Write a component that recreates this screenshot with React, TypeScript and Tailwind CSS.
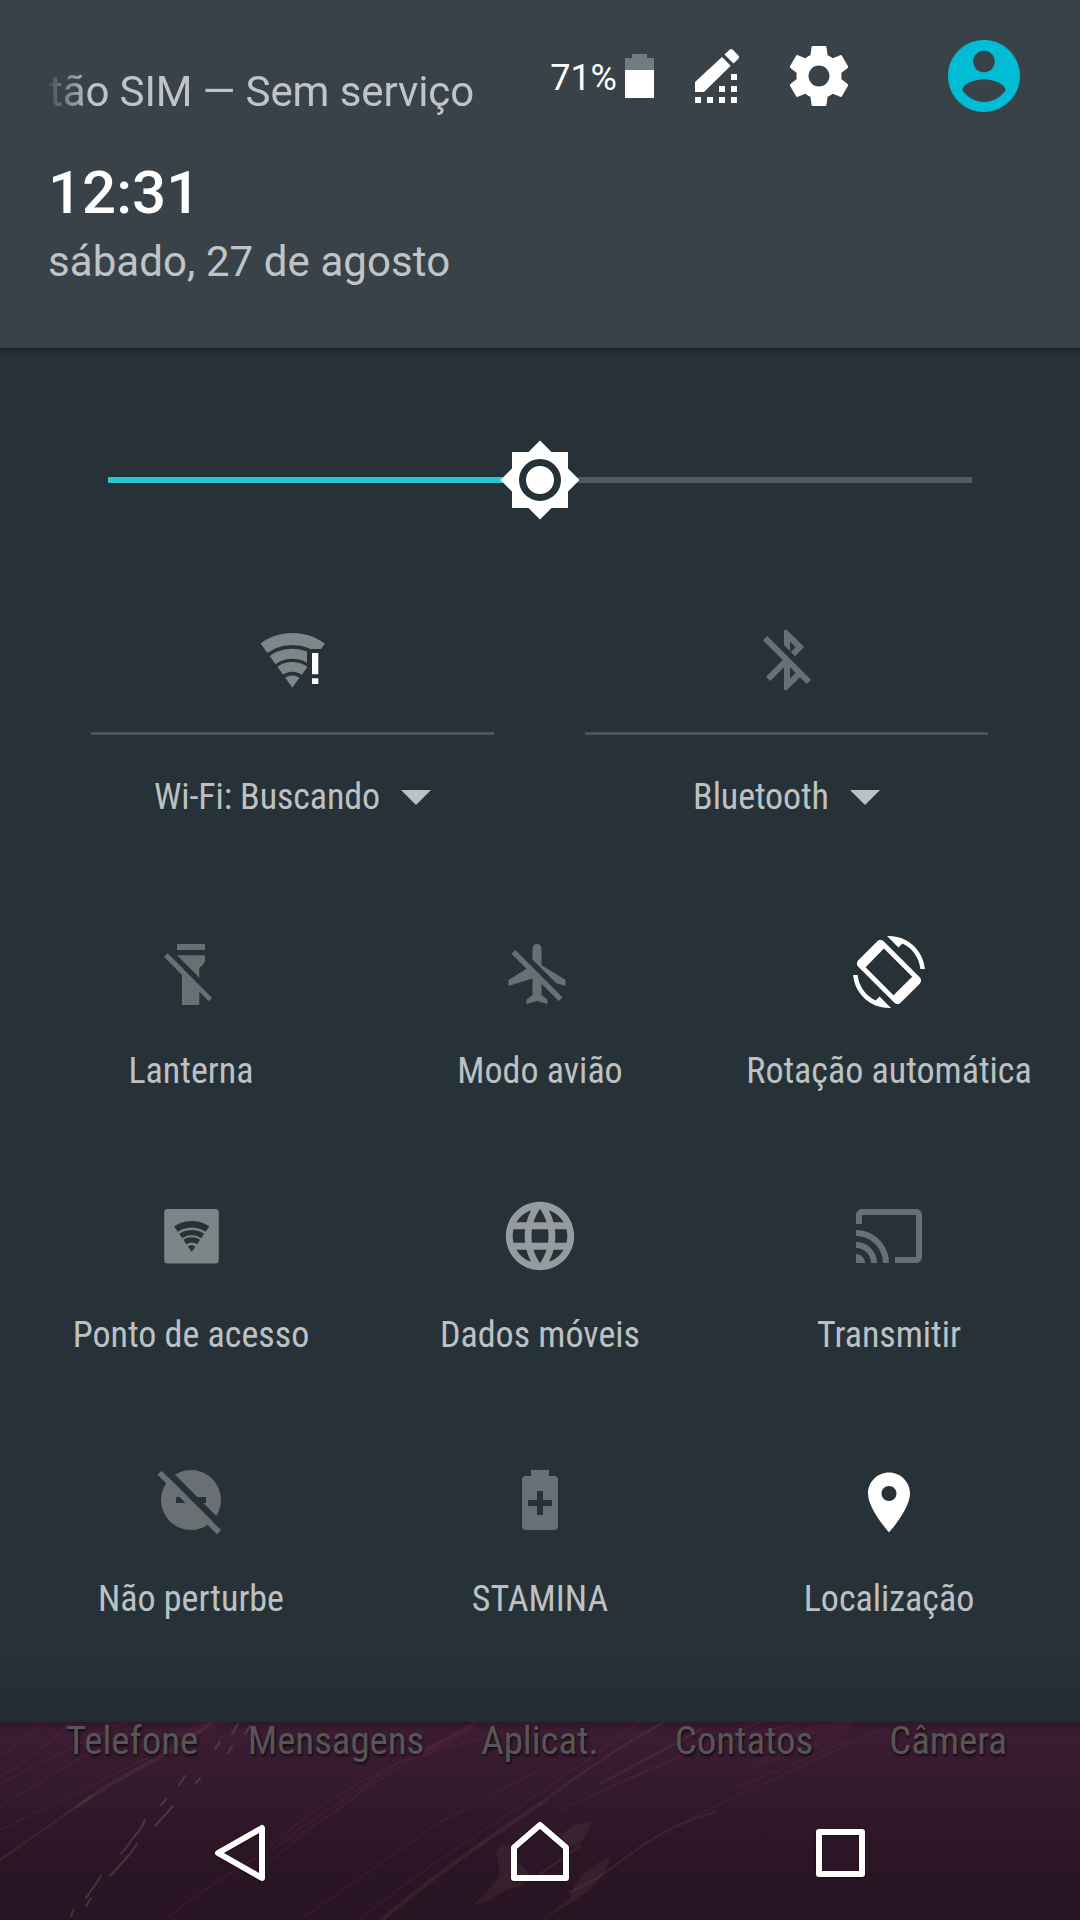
import type { ReactNode } from 'react'
import { MdCast, MdLanguage } from 'react-icons/md'

const CONDENSED = "font-['Roboto_Condensed','Roboto',sans-serif] [font-stretch:75%]"

function WifiIcon() {
  return (
    <svg viewBox="0 0 72 72" className="size-[72px]">
      <defs>
        <clipPath id="wifi-wedge">
          <path d="M35.3 63.5L-8 3.5V-10H80V3.5z" />
        </clipPath>
        <mask id="wifi-alert">
          <rect width="72" height="72" fill="#fff" />
          <path d="M50 25H72V72H50z" fill="#000" />
        </mask>
      </defs>
      <g clipPath="url(#wifi-wedge)" mask="url(#wifi-alert)" fill="none" stroke="#7f8689">
        <circle cx="35.3" cy="63.5" r="48.5" strokeWidth="12" />
        <circle cx="35.3" cy="63.5" r="33.7" strokeWidth="10" />
        <circle cx="35.3" cy="63.5" r="20.6" strokeWidth="9.6" />
        <circle cx="35.3" cy="63.5" r="6" strokeWidth="12" />
      </g>
      <path d="M55 29h6.3v21.3H55zM55 54.3h6.3v5.8H55z" fill="#fff" />
    </svg>
  )
}

function BluetoothOffIcon() {
  return (
    <svg viewBox="0 0 24 24" className="size-[72px]" fill="#677076">
      <path d="M13 5.83l1.88 1.88-1.6 1.6 1.41 1.41 3.02-3.02L12 2h-1v5.03l2 2v-3.2zM5.41 4L4 5.41 10.59 12 5 17.59 6.41 19 11 14.41V22h1l4.29-4.29 2.3 2.29L20 18.59 5.41 4zM13 18.17v-3.76l1.88 1.88L13 18.17z" />
    </svg>
  )
}

function FlashlightOffIcon() {
  return (
    <svg viewBox="0 0 72 72" className="size-[72px]" fill="#696f72">
      <path d="M22 8h28v6H22zM22 19.3h28v4.2c0 3.4-2.6 6.6-5.7 8.2v10zM12.8 17.3L9 20.7 27 39v30h17.3V55.7l9.5 9.6L57 62z" />
    </svg>
  )
}

function AirplaneOffIcon() {
  return (
    <svg viewBox="0.5 -0.67 24 24" className="size-[72px]" fill="#696f72">
      <path d="M13 9V3.5c0-.83-.67-1.5-1.5-1.5S10 2.67 10 3.5v3.68l7.83 7.83L21 16v-2l-8-5zM3 5.27l4.99 4.99L2 14v2l8-2.5V19l-2 1.5V22l3.5-1 3.5 1v-1.5L13 19v-3.73L18.73 21 20 19.73 4.27 4 3 5.27z" />
    </svg>
  )
}

function RotationIcon() {
  return (
    <svg viewBox="0 0 24 24" className="size-[72px]" fill="#fff" fillRule="evenodd">
      <path d="M16.48 2.52c3.27 1.55 5.61 4.72 5.97 8.48h1.5C23.44 4.84 18.29 0 12 0l-.66.03 3.81 3.81 1.33-1.32zM10.23 1.75c-.59-.59-1.54-.59-2.12 0L1.75 8.11c-.59.59-.59 1.54 0 2.12l12.02 12.02c.59.59 1.54.59 2.12 0l6.36-6.36c.59-.59.59-1.54 0-2.12L10.23 1.75zM10.3 4.2L4.2 10.4l9.3 9.35 6.25-6.2zM7.52 21.48C4.25 19.94 1.91 16.76 1.55 13H.05C.56 19.16 5.71 24 12 24l.66-.03-3.81-3.81-1.33 1.32z" />
    </svg>
  )
}

function HotspotIcon() {
  return (
    <svg viewBox="0 0 72 72" className="size-[72px]">
      <defs>
        <clipPath id="hotspot-wedge">
          <path d="M36.7 52L12.7 17V0h48v17z" />
        </clipPath>
      </defs>
      <rect x="9.2" y="9" width="54.6" height="54.6" rx="3.5" fill="#7e8588" />
      <g clipPath="url(#hotspot-wedge)" fill="none" stroke="#263238">
        <circle cx="36.7" cy="52" r="27.7" strokeWidth="6.6" />
        <circle cx="36.7" cy="52" r="19.4" strokeWidth="5.4" />
        <circle cx="36.7" cy="52" r="12.2" strokeWidth="5.2" />
        <circle cx="36.7" cy="52" r="3.4" strokeWidth="6.8" />
      </g>
    </svg>
  )
}

function DndOffIcon() {
  return (
    <svg viewBox="0 0 72 72" className="size-[72px]" fill="#696f72">
      <mask id="dnd-cut">
        <rect width="72" height="72" fill="#fff" />
        <path d="M21 33h30v6H21z" fill="#000" />
        <path d="M0 8.2V0L72 72v8.2z" fill="#fff" />
        <path d="M0 0L72 72V62.7L9.3 0z" fill="#000" />
      </mask>
      <circle cx="36" cy="36" r="30" mask="url(#dnd-cut)" />
      <path d="M6.6 6.8L2.5 10.8 62 70.3l4.1-4z" />
    </svg>
  )
}

function StaminaIcon() {
  return (
    <svg viewBox="0 0 72 72" className="size-[72px]" fill="#677076" fillRule="evenodd">
      <path d="M27 6h18v6h5.5c2 0 3.5 1.5 3.5 3.5v47c0 2-1.5 3.5-3.5 3.5h-29c-2 0-3.5-1.5-3.5-3.5v-47c0-2 1.5-3.5 3.5-3.5H27zM33 27v9h-9v6h9v9h6v-9h9v-6h-9v-9z" />
    </svg>
  )
}

function LocationIcon() {
  return (
    <svg viewBox="0 -0.8 24 24" className="size-[72px]" fill="#fff">
      <path d="M12 2C8.13 2 5 5.13 5 9c0 5.25 7 13 7 13s7-7.75 7-13c0-3.87-3.13-7-7-7zm0 9.5c-1.38 0-2.5-1.12-2.5-2.5s1.12-2.5 2.5-2.5 2.5 1.12 2.5 2.5-1.12 2.5-2.5 2.5z" />
    </svg>
  )
}

function BatteryIcon() {
  return (
    <svg viewBox="0 0 29 44" className="h-[44px] w-[29px]">
      <path d="M7 0h15v4h7v12H0V4h7z" fill="#747b7f" />
      <path d="M0 16h29v28H0z" fill="#fff" />
    </svg>
  )
}

function EditIcon() {
  return (
    <svg viewBox="0 0 44 54" className="h-[54px] w-[44px]" fill="#fff">
      <path d="M0 43V33L27 8l8.7 8.7L9 43zM29.5 5.5L34.5.8c1-1 2.3-1 3.3 0l5.5 5.7c1 1 1 2.3 0 3.2l-4.8 4.7z" />
      <path d="M36 25h6v6h-6zM24 37h6v6h-6zM36 37h6v6h-6zM0 48h6v6H0zM12 48h6v6h-6zM24 48h6v6h-6zM36 48h6v6h-6z" />
    </svg>
  )
}

function SettingsIcon() {
  return (
    <svg viewBox="0 0 24 24" className="size-[72px]" fill="#fff">
      <path d="M19.43 12.98c.04-.32.07-.64.07-.98s-.03-.66-.07-.98l2.11-1.65c.19-.15.24-.42.12-.64l-2-3.46c-.12-.22-.39-.3-.61-.22l-2.49 1c-.52-.4-1.08-.73-1.69-.98l-.38-2.65C14.46 2.18 14.25 2 14 2h-4c-.25 0-.46.18-.49.42l-.38 2.65c-.61.25-1.17.59-1.69.98l-2.49-1c-.23-.09-.49 0-.61.22l-2 3.46c-.13.22-.07.49.12.64l2.11 1.65c-.04.32-.07.65-.07.98s.03.66.07.98l-2.11 1.65c-.19.15-.24.42-.12.64l2 3.46c.12.22.39.3.61.22l2.49-1c.52.4 1.08.73 1.69.98l.38 2.65c.03.24.24.42.49.42h4c.25 0 .46-.18.49-.42l.38-2.65c.61-.25 1.17-.59 1.69-.98l2.49 1c.23.09.49 0 .61-.22l2-3.46c.12-.22.07-.49-.12-.64l-2.11-1.65zM12 15.5c-1.93 0-3.5-1.57-3.5-3.5s1.57-3.5 3.5-3.5 3.5 1.57 3.5 3.5-1.57 3.5-3.5 3.5z" />
    </svg>
  )
}

function AvatarIcon() {
  return (
    <svg viewBox="2 2 20 20" className="size-[72px]" fill="#00bcd4">
      <path d="M12 2C6.48 2 2 6.48 2 12s4.48 10 10 10 10-4.48 10-10S17.52 2 12 2zm0 3c1.66 0 3 1.34 3 3s-1.34 3-3 3-3-1.34-3-3 1.34-3 3-3zm0 14.2c-2.5 0-4.71-1.28-6-3.22.03-1.99 4-3.08 6-3.08 1.99 0 5.97 1.09 6 3.08-1.29 1.94-3.5 3.22-6 3.22z" />
    </svg>
  )
}

const WIDE_TILES: { label: string; icon: ReactNode }[] = [
  { label: 'Wi-Fi: Buscando', icon: <WifiIcon /> },
  { label: 'Bluetooth', icon: <BluetoothOffIcon /> },
]

const TILES: { label: string; icon: ReactNode }[] = [
  { label: 'Lanterna', icon: <FlashlightOffIcon /> },
  { label: 'Modo avião', icon: <AirplaneOffIcon /> },
  { label: 'Rotação automática', icon: <RotationIcon /> },
  { label: 'Ponto de acesso', icon: <HotspotIcon /> },
  { label: 'Dados móveis', icon: <MdLanguage className="size-[82px] shrink-0 text-[#969b9f]" /> },
  { label: 'Transmitir', icon: <MdCast className="size-[72px] text-[#677076]" /> },
  { label: 'Não perturbe', icon: <DndOffIcon /> },
  { label: 'STAMINA', icon: <StaminaIcon /> },
  { label: 'Localização', icon: <LocationIcon /> },
]

const DOCK = ['Telefone', 'Mensagens', 'Aplicat.', 'Contatos', 'Câmera']

function Header() {
  return (
    <header className="relative z-10 flex h-[348px] justify-between bg-[#384248] pl-[48px] shadow-[0_2px_6px_rgba(0,0,0,0.45)]">
      <div className="pt-[68px] text-[42px] text-[#c1c4c6]">
        <div className="pl-px leading-[48px] tracking-[-0.1px] whitespace-nowrap [mask-image:linear-gradient(to_right,rgba(0,0,0,0.1),#000_42px)]">
          tão SIM — Sem serviço
        </div>
        <div className="mt-[41px] text-[60px] leading-[72px] font-medium text-white">12:31</div>
        <div className="mt-[9px] leading-[48px] tracking-[0.08px] whitespace-nowrap">sábado, 27 de agosto</div>
      </div>
      <div className="flex h-[152px] items-center pr-[60px]">
        <span className="mt-1 text-[36px] leading-10 text-white">71%</span>
        <div className="ml-2">
          <BatteryIcon />
        </div>
        <div className="ml-[41px]">
          <EditIcon />
        </div>
        <div className="ml-[44px]">
          <SettingsIcon />
        </div>
        <div className="ml-[93px]">
          <AvatarIcon />
        </div>
      </div>
    </header>
  )
}

function BrightnessSlider() {
  return (
    <div className="mx-[108px] flex h-20 items-center">
      <div className="h-1.5 flex-1 bg-[#26c6d0]" />
      <svg viewBox="0 0 80 80" className="-mx-px size-20">
        <path d="M0 37h6v6H0z" fill="#26c6d0" />
        <path d="M74 37h6v6h-6z" fill="#515b60" />
        <path d="M12 12h16.5L40 .5 51.5 12H68v16.5L79.5 40 68 51.5V68H51.5L40 79.500 28.5 68H12V51.5L.5 40 12 28.5z" fill="#fff" />
        <circle cx="40" cy="40" r="17.5" fill="none" stroke="#263238" strokeWidth="7" />
      </svg>
      <div className="h-1.5 flex-1 bg-[#515b60]" />
    </div>
  )
}

function Wallpaper() {
  return (
    <svg viewBox="0 0 1080 198" className="absolute inset-0 h-full w-full" fill="none" strokeLinecap="round">
      <g stroke="#7c2f5c" strokeOpacity=".22" strokeWidth="1.500">
        <path d="M0 54C30 40 50 18 72 0M0 34L46 0M0 62C60 30 90 16 128 0M0 84L110 18M0 108L180 20" />
        <path d="M268 140C330 90 400 40 478 0M270 125C340 60 410 38 470 4M280 120L400 40 500 10M165 198C260 120 330 110 380 50" />
        <path d="M360 198C440 130 520 90 640 0M300 198L440 100 540 48M560 88L760 0M600 70C680 30 720 20 800 0M690 96L880 8M740 64L850 18" />
      </g>
      <g stroke="#7c2f5c" strokeOpacity=".12" strokeWidth="8">
        <path d="M790 12L850 2M755 42L815 22M180 12L222 0M420 34L470 6" />
      </g>
      <g stroke="#8c6a5c" strokeOpacity=".15">
        <path d="M78 84C120 52 160 40 210 2M382 198C450 140 500 110 540 82" strokeWidth="4" />
        <path d="M0 138C40 110 60 96 92 74M540 82C600 36 630 20 664 0M600 62L700 8M540 152L580 124M570 170C620 150 640 110 716 90" strokeWidth="2.500" />
      </g>
      <g stroke="#9a8288" strokeOpacity=".28" strokeWidth="2">
        <path d="M238 2l-6 10M250 4l-5 8M220 20l-5 7M232 24l-4 7M185 54l-6 9M200 56l-4 5M166 77l-5 6M173 84l-7 8M166 92l-11 12M145 98l-4 8M141 106l-20 26M137 122l-7 10M130 132l-20 22M101 154l-4 6M97 160l-11 16M91 176l-5 8M73 188l-2 6" />
      </g>
      <path d="M496 130c8-12 20-8 18 6l14 14c4 14-14 16-22 18-12 8-20 14-32 14 10-12 22-18 26-30zM560 118c4-10 14-18 32-18-6 12-8 20-18 24-8 2-12 0-14-6zM570 176c6-20 18-30 40-42-4 20-14 26-20 34-12 8-20 14-48 30z" fill="#8c6a5c" fillOpacity=".13" />
    </svg>
  )
}

function NavBar() {
  return (
    <svg viewBox="0 0 1080 144" className="relative h-[144px] w-full drop-shadow-[0_1px_1px_rgba(0,0,0,0.5)]" fill="none" stroke="#fff" strokeWidth="6" strokeLinejoin="round">
      <path d="M262 52v50l-44-25z" />
      <path d="M514 71.5L540 49l26 22.5V102h-52z" />
      <path d="M819 56h43v42h-43z" />
    </svg>
  )
}

export default function App() {
  return (
    <div className="flex h-[1920px] w-[1080px] flex-col overflow-hidden bg-[#263238] font-['Roboto',sans-serif]">
      <Header />

      {/* Quick settings panel */}
      <main className={`h-[1374px] bg-[linear-gradient(to_bottom,#263238_1310px,#222c32)] pt-[92px] text-[36px] leading-10 text-[#bdc1c3] ${CONDENSED}`}>
        <BrightnessSlider />

        <div className="mt-[104px] flex gap-[91px] pl-[91px]">
          {WIDE_TILES.map(t => (
            <div key={t.label} className="flex w-[403px] flex-col items-center">
              {t.icon}
              <div className="mt-9 h-[3px] w-full bg-[#4a545a]" />
              <div className="mt-[42px] flex items-center gap-[21px] tracking-[-0.1px] whitespace-nowrap">
                {t.label}
                <svg viewBox="0 0 30 15" className="h-[15px] w-[30px]" fill="#bdc1c3">
                  <path d="M0 0h30L15 15z" />
                </svg>
              </div>
            </div>
          ))}
        </div>

        <div className="mx-auto mt-[119px] grid w-[1047px] grid-cols-3 gap-y-[109px]">
          {TILES.map(t => (
            <div key={t.label} className="flex flex-col items-center">
              <div className="flex h-[72px] items-center">{t.icon}</div>
              <div className="mt-[43px] whitespace-nowrap">{t.label}</div>
            </div>
          ))}
        </div>
      </main>

      {/* Dimmed home screen below the panel */}
      <footer className="relative flex h-[198px] flex-col justify-between bg-[linear-gradient(to_bottom,#2f1728,#3c1c32_10px,#331a2d_70px,#2c1626_130px,#281422)]">
        <Wallpaper />
        <div className={`relative mx-[30px] grid grid-cols-5 text-center text-[39px] leading-[38px] tracking-[-0.1px] text-[#565656] [text-shadow:1px_2px_3px_rgba(0,0,0,0.7)] ${CONDENSED}`}>
          {DOCK.map(name => (
            <span key={name}>{name}</span>
          ))}
        </div>
        <NavBar />
      </footer>
    </div>
  )
}
